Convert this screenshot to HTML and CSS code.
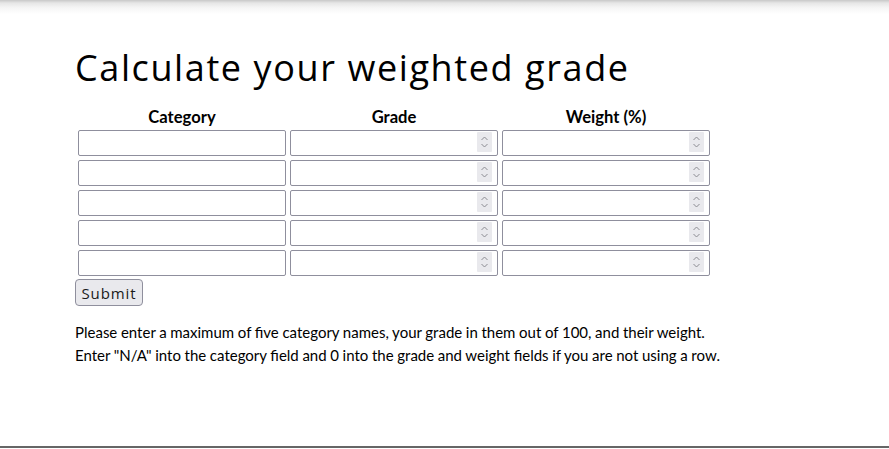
FILE: index.html
```html
<!DOCTYPE html>
<html lang="en">
<head>
<meta charset="utf-8">
<title>Weighted Grade Calculator</title>
<link rel="stylesheet" href="styles.css">
</head>
<body>
<div class="page">
  <div class="top-shadow"></div>
  <main class="content">
    <h1 class="title">Calculate your weighted grade</h1>
    <form class="grade-form">
      <table class="grade-table">
        <thead>
          <tr><th>Category</th><th>Grade</th><th>Weight (%)</th></tr>
        </thead>
        <tbody>
          <tr>
            <td><input class="field" type="text"></td>
            <td><div class="num"><input class="field" type="text"><span class="spin"><svg viewBox="0 0 15 20" width="15" height="20"><path d="M4.5 8 L7.5 5 L10.5 8" fill="none" stroke="#8d8d93" stroke-width="1"/><path d="M4.5 12 L7.5 15 L10.5 12" fill="none" stroke="#8d8d93" stroke-width="1"/></svg></span></div></td>
            <td><div class="num"><input class="field" type="text"><span class="spin"><svg viewBox="0 0 15 20" width="15" height="20"><path d="M4.5 8 L7.5 5 L10.5 8" fill="none" stroke="#8d8d93" stroke-width="1"/><path d="M4.5 12 L7.5 15 L10.5 12" fill="none" stroke="#8d8d93" stroke-width="1"/></svg></span></div></td>
          </tr>
          <tr>
            <td><input class="field" type="text"></td>
            <td><div class="num"><input class="field" type="text"><span class="spin"><svg viewBox="0 0 15 20" width="15" height="20"><path d="M4.5 8 L7.5 5 L10.5 8" fill="none" stroke="#8d8d93" stroke-width="1"/><path d="M4.5 12 L7.5 15 L10.5 12" fill="none" stroke="#8d8d93" stroke-width="1"/></svg></span></div></td>
            <td><div class="num"><input class="field" type="text"><span class="spin"><svg viewBox="0 0 15 20" width="15" height="20"><path d="M4.5 8 L7.5 5 L10.5 8" fill="none" stroke="#8d8d93" stroke-width="1"/><path d="M4.5 12 L7.5 15 L10.5 12" fill="none" stroke="#8d8d93" stroke-width="1"/></svg></span></div></td>
          </tr>
          <tr>
            <td><input class="field" type="text"></td>
            <td><div class="num"><input class="field" type="text"><span class="spin"><svg viewBox="0 0 15 20" width="15" height="20"><path d="M4.5 8 L7.5 5 L10.5 8" fill="none" stroke="#8d8d93" stroke-width="1"/><path d="M4.5 12 L7.5 15 L10.5 12" fill="none" stroke="#8d8d93" stroke-width="1"/></svg></span></div></td>
            <td><div class="num"><input class="field" type="text"><span class="spin"><svg viewBox="0 0 15 20" width="15" height="20"><path d="M4.5 8 L7.5 5 L10.5 8" fill="none" stroke="#8d8d93" stroke-width="1"/><path d="M4.5 12 L7.5 15 L10.5 12" fill="none" stroke="#8d8d93" stroke-width="1"/></svg></span></div></td>
          </tr>
          <tr>
            <td><input class="field" type="text"></td>
            <td><div class="num"><input class="field" type="text"><span class="spin"><svg viewBox="0 0 15 20" width="15" height="20"><path d="M4.5 8 L7.5 5 L10.5 8" fill="none" stroke="#8d8d93" stroke-width="1"/><path d="M4.5 12 L7.5 15 L10.5 12" fill="none" stroke="#8d8d93" stroke-width="1"/></svg></span></div></td>
            <td><div class="num"><input class="field" type="text"><span class="spin"><svg viewBox="0 0 15 20" width="15" height="20"><path d="M4.5 8 L7.5 5 L10.5 8" fill="none" stroke="#8d8d93" stroke-width="1"/><path d="M4.5 12 L7.5 15 L10.5 12" fill="none" stroke="#8d8d93" stroke-width="1"/></svg></span></div></td>
          </tr>
          <tr>
            <td><input class="field" type="text"></td>
            <td><div class="num"><input class="field" type="text"><span class="spin"><svg viewBox="0 0 15 20" width="15" height="20"><path d="M4.5 8 L7.5 5 L10.5 8" fill="none" stroke="#8d8d93" stroke-width="1"/><path d="M4.5 12 L7.5 15 L10.5 12" fill="none" stroke="#8d8d93" stroke-width="1"/></svg></span></div></td>
            <td><div class="num"><input class="field" type="text"><span class="spin"><svg viewBox="0 0 15 20" width="15" height="20"><path d="M4.5 8 L7.5 5 L10.5 8" fill="none" stroke="#8d8d93" stroke-width="1"/><path d="M4.5 12 L7.5 15 L10.5 12" fill="none" stroke="#8d8d93" stroke-width="1"/></svg></span></div></td>
          </tr>
        </tbody>
      </table>
      <button class="submit" type="button">Submit</button>
    </form>
    <p class="note">Please enter a maximum of five category names, your grade in them out of 100, and their weight.<br>Enter "N/A" into the category field and 0 into the grade and weight fields if you are not using a row.</p>
  </main>
  <footer class="bottom-line"></footer>
</div>
</body>
</html>
```
FILE: styles.css
```css
html, body {
  margin: 0;
  padding: 0;
  background: #fff;
}
body {
  font-family: Lato, "Liberation Sans", sans-serif;
  color: #000;
}
.page {
  height: 449px;
  display: flex;
  flex-direction: column;
}
.top-shadow {
  height: 14px;
  background: linear-gradient(to bottom, #c8c8c8 0, #e6e6e6 3px, #f6f6f6 8px, #ffffff 14px);
  flex: none;
}
.content {
  flex: 1;
  padding-left: 75px;
}
.title {
  font-family: "Open Sans", "DejaVu Sans", sans-serif;
  font-weight: 400;
  font-size: 36px;
  line-height: 44px;
  margin: 32px 0 0 0;
  letter-spacing: 1.6px;
  color: #000;
}
.grade-form {
  margin-top: 16px;
}
.grade-table {
  border-spacing: 2px;
  margin: 0;
}
.grade-table th {
  font-weight: 700;
  font-size: 16.6px;
  line-height: 18px;
  padding: 0 1px 1px 1px;
  text-align: center;
}
.grade-table td {
  padding: 1px;
}
.field {
  display: block;
  box-sizing: border-box;
  width: 208px;
  height: 26px;
  margin: 0;
  border: 1px solid #8f8f9d;
  border-radius: 2px;
  background: #fff;
  font: 14px Lato, sans-serif;
  padding: 2px 4px;
}
.num {
  position: relative;
  width: 208px;
}
.spin {
  position: absolute;
  right: 6px;
  top: 2px;
  width: 15px;
  height: 20px;
  background: #e9e9ed;
  border-radius: 1px;
  display: block;
}
.spin svg {
  display: block;
}
.submit {
  display: block;
  margin: 0;
  box-sizing: border-box;
  height: 27px;
  width: 68px;
  padding: 0;
  text-align: center;
  font-family: "Open Sans", "DejaVu Sans", sans-serif;
  font-size: 15px;
  letter-spacing: 0.9px;
  color: #1a1a1a;
  background: #e9e9ed;
  border: 1px solid #8f8f9d;
  border-radius: 4px;
}
.note {
  margin: 15px 0 0 0;
  font-size: 15px;
  word-spacing: -0.2px;
  line-height: 23px;
}
.bottom-line {
  flex: none;
  height: 2px;
  margin-bottom: 1px;
  background: #666;
}
```
